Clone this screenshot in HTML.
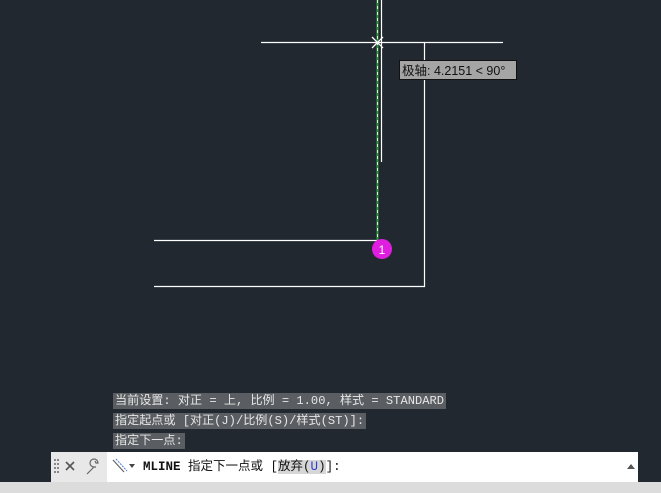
<!DOCTYPE html>
<html><head><meta charset="utf-8"><style>
body{margin:0;width:661px;height:493px;overflow:hidden;background:#212830;position:relative;font-family:"Liberation Mono","Noto Sans CJK SC",monospace;}
.l{position:absolute;left:113px;height:16px;line-height:16px;font-size:12.1px;color:#e6e6e6;background:#5a5d61;padding:0 2px;white-space:pre}
.bar{position:absolute;left:51px;top:452px;width:587px;height:30px;background:#fff;}
.grip{position:absolute;left:0;top:0;width:56px;height:30px;background:#e8e8e8}
.bottom{position:absolute;left:0;top:482px;width:661px;height:11px;background:#dcdcdc}
</style></head><body>
<svg width="661" height="493" style="position:absolute;left:0;top:0">
<g stroke="#ffffff" stroke-width="1.2" fill="none">
<line x1="381.5" y1="0" x2="381.5" y2="162"/>
<line x1="261" y1="42.5" x2="503" y2="42.5"/>
<line x1="424.5" y1="42" x2="424.5" y2="287"/>
<line x1="154" y1="286.5" x2="425" y2="286.5"/>
<line x1="154" y1="240.5" x2="377" y2="240.5"/>
</g>
<line x1="377.5" y1="0" x2="377.5" y2="240" stroke="#2f9a40" stroke-width="2"/>
<line x1="377.5" y1="0" x2="377.5" y2="240" stroke="#d8f0d8" stroke-width="1" stroke-dasharray="3,3"/>
<g stroke="#fff" stroke-width="1.3"><line x1="372" y1="37" x2="383" y2="48"/><line x1="383" y1="37" x2="372" y2="48"/></g>
<rect x="399.5" y="60.5" width="117" height="19" fill="#a5a5a5" stroke="#111"/>
<text x="402" y="75" font-family="Liberation Sans,Noto Sans CJK SC,sans-serif" font-size="12.5" fill="#111">极轴: 4.2151 &lt; 90°</text>
<circle cx="382" cy="249" r="10" fill="#e01ee0"/>
<text x="382" y="254" font-family="Liberation Sans,sans-serif" font-size="12" fill="#fff" text-anchor="middle">1</text>
</svg>
<div class="l" style="top:393px">当前设置: 对正 = 上, 比例 = 1.00, 样式 = STANDARD</div>
<div class="l" style="top:413px">指定起点或 [对正(J)/比例(S)/样式(ST)]:</div>
<div class="l" style="top:433px">指定下一点:</div>
<div class="bar">
<div class="grip">
<svg width="56" height="30"><g fill="#888"><rect x="3" y="7" width="2" height="2"/><rect x="6" y="7" width="2" height="2"/><rect x="3" y="11" width="2" height="2"/><rect x="6" y="11" width="2" height="2"/><rect x="3" y="15" width="2" height="2"/><rect x="6" y="15" width="2" height="2"/><rect x="3" y="19" width="2" height="2"/><rect x="6" y="19" width="2" height="2"/></g>
<g stroke="#555" stroke-width="1.6"><line x1="15" y1="10" x2="23" y2="18"/><line x1="23" y1="10" x2="15" y2="18"/></g>
<path d="M36 22 L43 15 M43 15 a4 4 0 1 1 4 -4 l-2 0 l-1 -2 M43 15 l2 0" stroke="#666" stroke-width="1.2" fill="none"/>
</svg></div>
<svg style="position:absolute;left:60px;top:6px" width="32" height="18"><line x1="2" y1="2" x2="13" y2="14" stroke="#666" stroke-width="1.2"/><line x1="5" y1="1" x2="16" y2="13" stroke="#4a7cd0" stroke-width="1" stroke-dasharray="2,1"/><path d="M18 6 l6 0 l-3 4z" fill="#444"/></svg>
<div style="position:absolute;left:92px;top:7px;font-size:12.5px;line-height:16px;color:#111;white-space:pre"><b>MLINE</b> 指定下一点或 [<span style="background:#d6d6d6">放弃(<span style="color:#2a3ad0">U</span>)</span>]:</div>
<svg style="position:absolute;left:575px;top:11px" width="10" height="8"><path d="M1 6 L5 1 L9 6z" fill="#555"/></svg>
</div>
<div class="bottom"></div>
</body></html>
